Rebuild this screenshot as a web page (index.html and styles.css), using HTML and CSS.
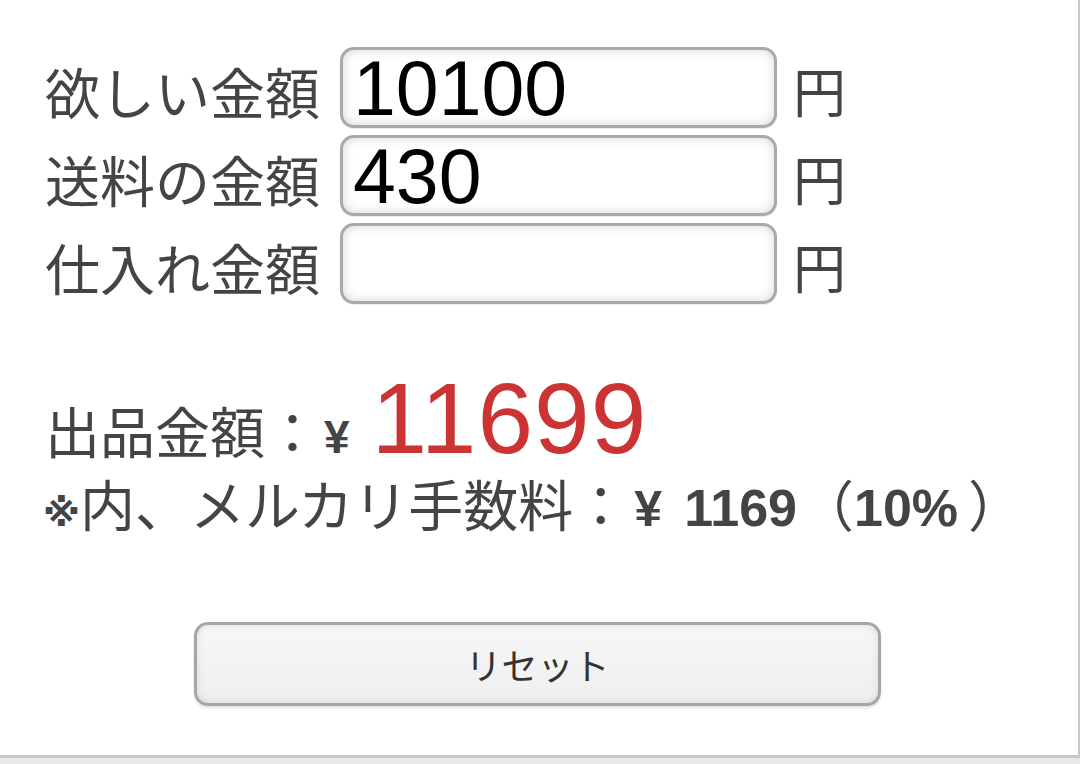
FILE: index.html
```
<!DOCTYPE html>
<html lang="ja">
<head>
<meta charset="utf-8">
<link rel="stylesheet" href="styles.css">
</head>
<body>
<div class="frame">
  <div class="form">
    <div class="row">
      <label class="label">欲しい金額</label>
      <div class="field"><span class="value">10100</span></div>
      <span class="unit">円</span>
    </div>
    <div class="row">
      <label class="label">送料の金額</label>
      <div class="field"><span class="value">430</span></div>
      <span class="unit">円</span>
    </div>
    <div class="row">
      <label class="label">仕入れ金額</label>
      <div class="field"><span class="value"></span></div>
      <span class="unit">円</span>
    </div>
  </div>
  <div class="result">
    <div class="price-line"><span class="jp">出品金額：</span><span class="yen">¥</span><span class="price">11699</span></div>
    <div class="fee-line"><span class="mark">※</span><span class="jp">内、メルカリ手数料：</span><span class="yen yen-fee">¥</span><span class="num num-first">1169</span><span class="jp">（</span><span class="num">10%</span><span class="jp close">）</span></div>
  </div>
  <div class="actions">
    <button class="reset">リセット</button>
  </div>
</div>
</body>
</html>
```
FILE: styles.css
```
html, body {
  margin: 0;
  padding: 0;
  background: #e9e9e9;
}
body {
  width: 1080px;
  height: 764px;
  overflow: hidden;
  font-family: "Noto Sans CJK JP", "Liberation Sans", sans-serif;
  color: #444;
}
.frame {
  box-sizing: border-box;
  width: 1080px;
  height: 758px;
  background: #fff;
  border-right: 2px solid #c8c8c8;
  border-bottom: 3px solid #c8c8c8;
  padding: 47px 0 0 45px;
  display: flex;
  flex-direction: column;
}
.form {
  display: flex;
  flex-direction: column;
  gap: 7px;
}
.row {
  display: flex;
  align-items: center;
  height: 81px;
}
.label {
  width: 295px;
  font-size: 55px;
  line-height: 1;
  white-space: nowrap;
  color: #444;
  margin-top: 6px;
}
.field {
  box-sizing: border-box;
  width: 437px;
  height: 81px;
  border: 3px solid #a9a9a9;
  border-radius: 14px;
  background: #fff;
  box-shadow: inset 0 0 12px rgba(0,0,0,0.16), 0 1px 1px rgba(0,0,0,0.08);
  display: flex;
  align-items: center;
  padding-left: 10px;
}
.value {
  font-family: "Liberation Sans", Arial, sans-serif;
  font-size: 77px;
  line-height: 1;
  color: #000;
  margin-top: 2px;
}
.unit {
  margin-left: 16px;
  margin-top: 6px;
  font-size: 53px;
  line-height: 1;
  color: #444;
}
.result {
  margin-top: 72px;
  display: flex;
  flex-direction: column;
}
.price-line {
  display: flex;
  align-items: baseline;
  height: 84px;
  white-space: nowrap;
}
.price-line .jp {
  font-size: 55px;
  line-height: 1;
}
.yen {
  font-family: "Liberation Sans", Arial, sans-serif;
  font-size: 46px;
  font-weight: bold;
  line-height: 1;
  color: #444;
  margin-left: 4px;
}
.price {
  font-family: "Liberation Sans", Arial, sans-serif;
  font-size: 100px;
  line-height: 0.84;
  color: #cc3333;
  margin-left: 22px;
  letter-spacing: 1px;
}
.fee-line {
  display: flex;
  align-items: baseline;
  white-space: nowrap;
  font-size: 55px;
  line-height: 1;
  margin-top: 15px;
}
.mark {
  font-family: "DejaVu Sans", sans-serif;
  font-size: 38px;
  font-weight: bold;
  width: 35px;
  margin-left: -2px;
  margin-right: 2px;
}
.yen-fee {
  font-size: 50px;
  margin-left: 6px;
}
.num {
  font-family: "Liberation Sans", Arial, sans-serif;
  font-size: 52px;
  font-weight: bold;
  color: #444;
}
.num-first {
  margin-left: 22px;
  margin-right: 2px;
}
.close {
  margin-left: 10px;
}
.actions {
  margin-top: 88px;
  padding-left: 149px;
}
.reset {
  box-sizing: border-box;
  width: 687px;
  height: 84px;
  border: 3px solid #a6a6a6;
  border-radius: 14px;
  background: linear-gradient(#f7f7f7, #efefef);
  box-shadow: inset 0 0 10px rgba(0,0,0,0.10), 0 2px 3px rgba(0,0,0,0.12);
  font-family: "Noto Sans CJK JP", sans-serif;
  font-size: 36px;
  color: #333;
  padding: 0;
  cursor: pointer;
}
```
